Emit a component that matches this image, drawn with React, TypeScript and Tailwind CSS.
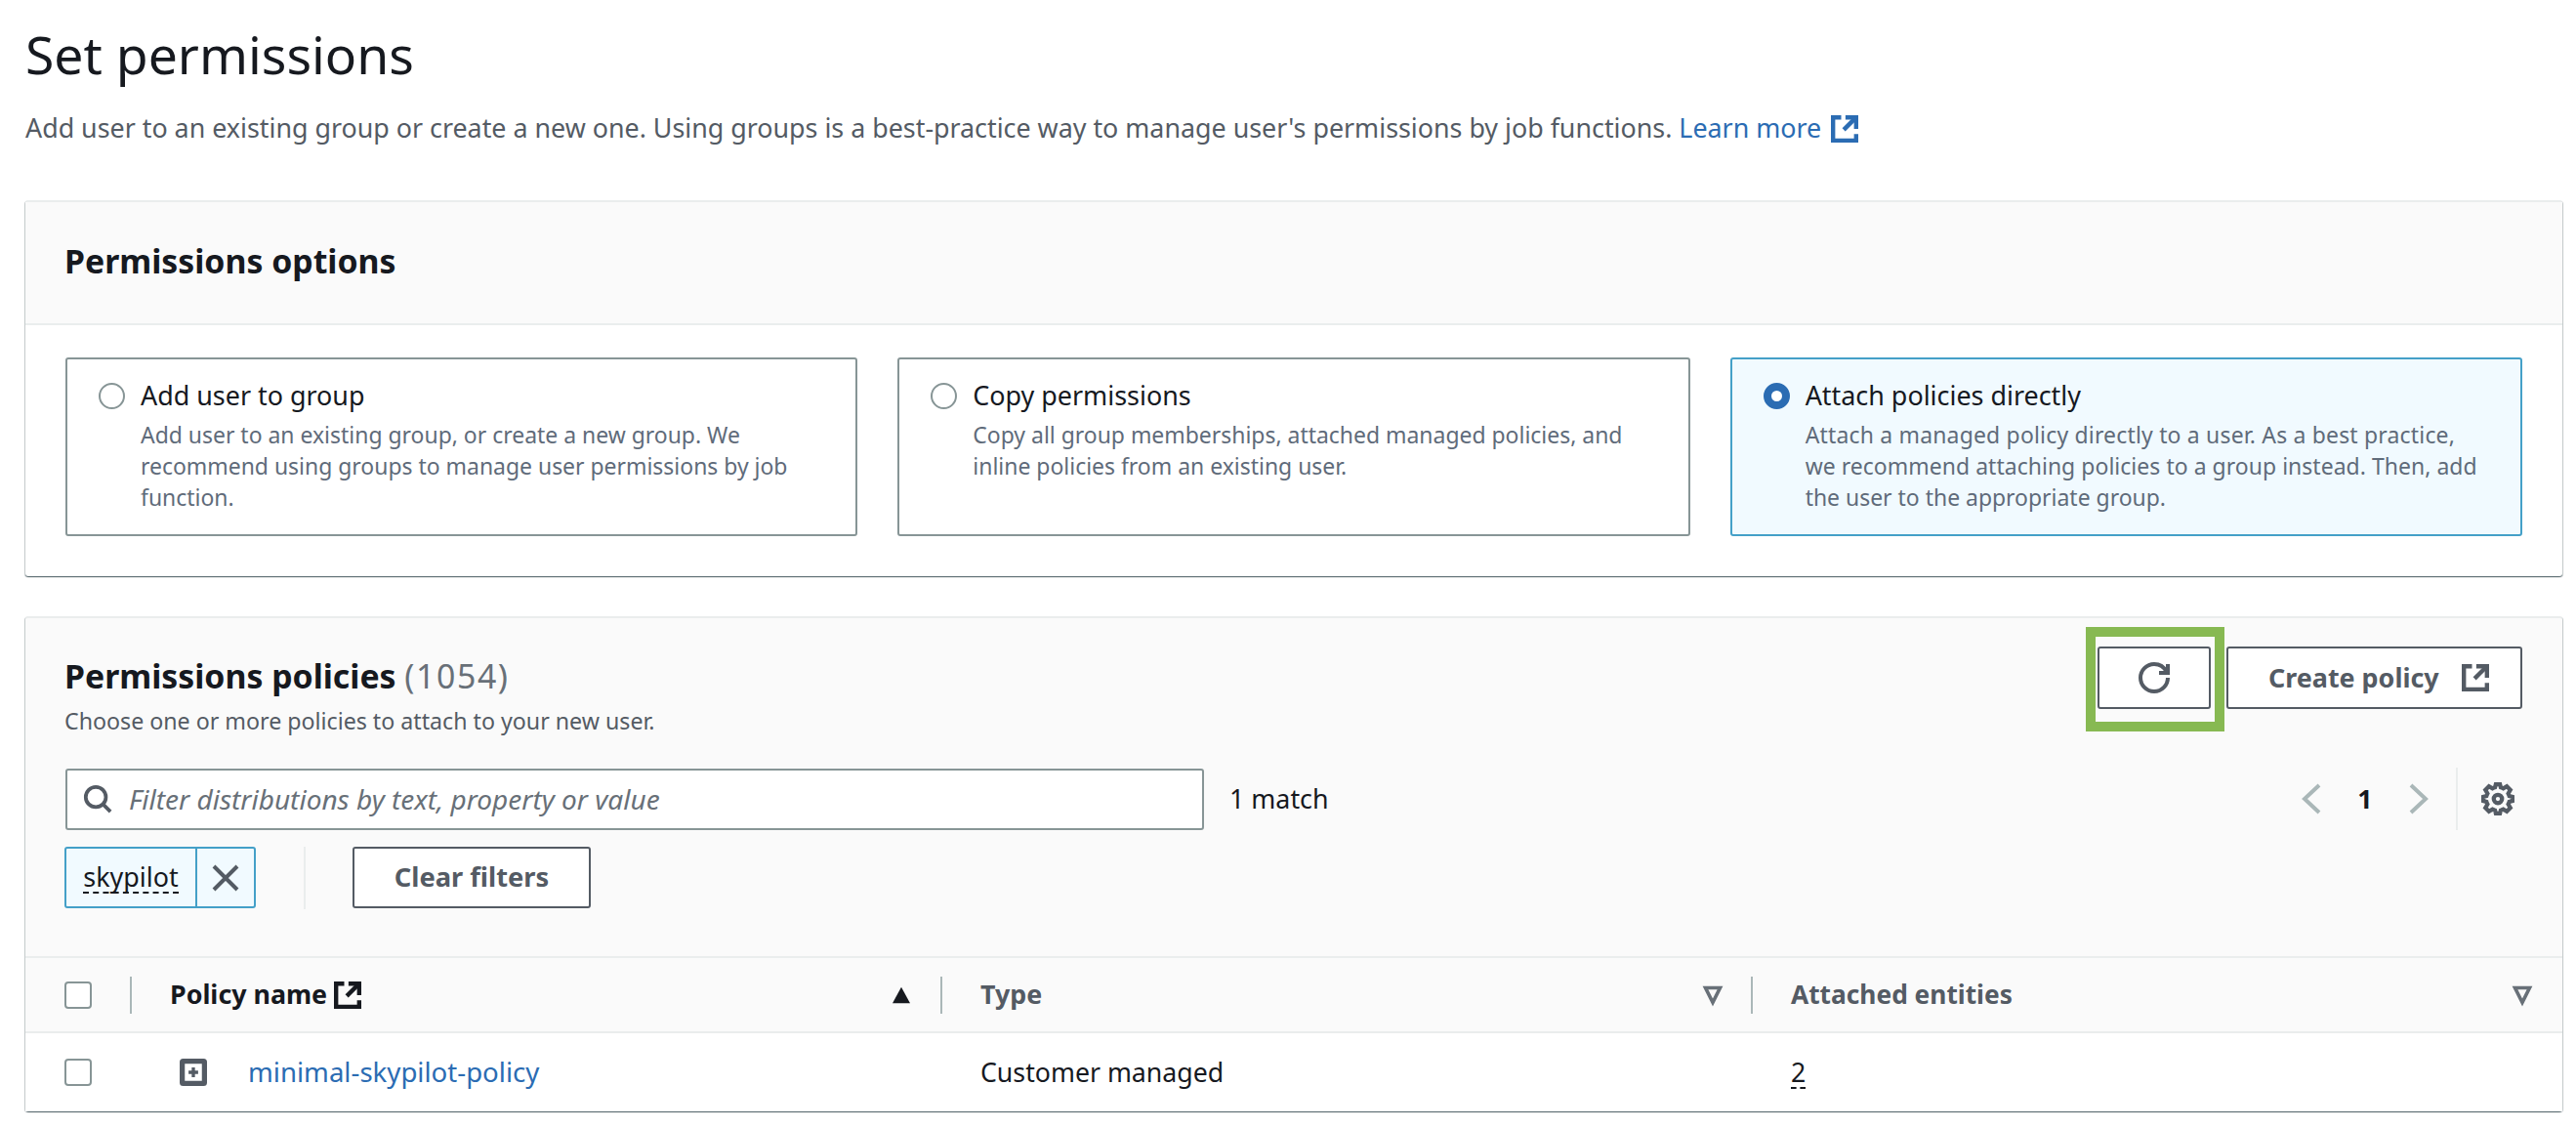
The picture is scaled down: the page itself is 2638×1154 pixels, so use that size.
import React from "react";

const Ext = ({ className }: { className: string }) => (
  <svg viewBox="0 0 16 16" fill="none" stroke="currentColor" strokeWidth="2.5" className={className}>
    <path d="M14.75 8V1.25H8.5" />
    <path d="M14.5 1.5 7.5 8.5" />
    <path d="M6 1.25H1.25v13.5h13.5V11" />
  </svg>
);

const Radio = ({ on }: { on?: boolean }) =>
  on ? (
    <span className="w-[27px] h-[27px] rounded-full border-[8px] border-[#2b6cb3] bg-white shrink-0" />
  ) : (
    <span className="w-[27px] h-[27px] rounded-full border-2 border-[#879596] bg-white shrink-0" />
  );

const Card = ({ title, children, on }: { title: string; children: React.ReactNode; on?: boolean }) => (
  <div
    className={`h-[183px] rounded-[3px] border-2 pl-[32px] pr-[38px] pt-[21px] flex gap-[16px] ${
      on ? "border-[#44a0c8] bg-[#f1faff]" : "border-[#879596] bg-white"
    }`}
  >
    <div className="h-[32px] flex items-center">
      <Radio on={on} />
    </div>
    <div>
      <div className="text-[26.9px] leading-[32px] text-[#16191f] whitespace-nowrap">{title}</div>
      <div className="mt-[8px] text-[22.95px] leading-[32px] text-[#5f6b7a]">{children}</div>
    </div>
  </div>
);

const Check = () => <span className="block w-[28px] h-[28px] rounded-[4px] border-2 border-[#879596] bg-white" />;

const Down = () => (
  <svg viewBox="0 0 16 16" className="w-[24px] h-[24px] text-[#687078]" fill="none" stroke="currentColor" strokeWidth="2.4">
    <path d="M3 3h10l-5 10z" />
  </svg>
);

const Up = () => (
  <svg viewBox="0 0 16 16" className="w-[24px] h-[24px] text-[#16191f]" fill="currentColor">
    <path d="M8 2.5 14 13.5H2z" />
  </svg>
);

const HeaderCell = ({ children }: { children: React.ReactNode }) => (
  <div className="h-[38px] border-l-2 border-[#aab7b8] pl-[39px] flex items-center justify-between text-[26.8px] font-bold text-[#545b64]">
    {children}
  </div>
);

export default function App() {
  return (
    <div className="w-[2638px] h-[1154px] overflow-hidden bg-white pl-[26px] pr-[14px] font-['Noto_Sans','Open_Sans',sans-serif] text-[#16191f]">
      <div className="h-[24px]" />
      <h1 className="h-[64px] text-[53.5px] leading-[64px] font-normal">Set permissions</h1>
      <p className="mt-[27px] text-[26.83px] leading-[32px] text-[#545b64] whitespace-nowrap">
        Add user to an existing group or create a new one. Using groups is a best-practice way to manage user's permissions by job functions.{" "}
        <span className="text-[#2b6cb3]">Learn more</span>
        <Ext className="inline-block w-[28px] h-[28px] ml-[10px] -mt-[4px] text-[#2b6cb3]" />
      </p>

      <section className="mt-[58px] bg-white border-t-2 border-[#eaeded] rounded-[3px] shadow-[0_1px_1px_0_rgba(0,28,36,0.5),1px_1px_1px_0_rgba(0,28,36,0.2),-1px_1px_1px_0_rgba(0,28,36,0.2)]">
        <div className="h-[126px] bg-[#fafafa] border-b-2 border-[#eaeded] px-[40px] pb-[4px] flex items-center">
          <h2 className="text-[33.8px] leading-[40px] font-bold">Permissions options</h2>
        </div>
        <div className="px-[41px] pt-[33px] pb-[41px] grid grid-cols-3 gap-[41px]">
          <Card title="Add user to group">Add user to an existing group, or create a new group. We recommend using groups to manage user permissions by job function.</Card>
          <Card title="Copy permissions">Copy all group memberships, attached managed policies, and inline policies from an existing user.</Card>
          <Card on title="Attach policies directly">
            <div className="whitespace-nowrap tracking-[0.2px]">Attach a managed policy directly to a user. As a best practice,</div>
            <div className="whitespace-nowrap tracking-[0.05px]">we recommend attaching policies to a group instead. Then, add</div>
            <div className="whitespace-nowrap">the user to the appropriate group.</div>
          </Card>
        </div>
      </section>

      <section className="mt-[41px] bg-[#fafafa] border-t-2 border-[#eaeded] rounded-[3px] shadow-[0_1px_1px_0_rgba(0,28,36,0.5),1px_1px_1px_0_rgba(0,28,36,0.2),-1px_1px_1px_0_rgba(0,28,36,0.2)]">
        <div className="pl-[40px] pr-[41px] pt-[29px] flex justify-between items-start">
          <div className="pt-[10px]">
            <h2 className="text-[33.8px] leading-[40px] font-bold">
              Permissions policies <span className="font-normal text-[#687078] tracking-[1.6px]">(1054)</span>
            </h2>
            <p className="mt-[10px] text-[23.2px] leading-[32px] text-[#545b64]">Choose one or more policies to attach to your new user.</p>
          </div>
          <div className="flex gap-[16px]">
            <div className="relative">
              <button className="w-[116px] h-[64px] rounded-[3px] border-2 border-[#545b64] bg-white flex items-center justify-center text-[#545b64]">
                <svg viewBox="0 0 16 16" fill="none" stroke="currentColor" strokeWidth="2" className="w-[32px] h-[32px]">
                  <path d="M15 8a7 7 0 1 1-7-7c2.8 0 5.2 1.6 6.3 4" />
                  <path d="M15 1v4.5h-4.5" />
                </svg>
              </button>
              <span className="absolute -left-[12px] -right-[14px] -top-[20px] -bottom-[23px] border-[10px] border-[#87b952]" />
            </div>
            <button className="w-[303px] h-[64px] rounded-[3px] border-2 border-[#545b64] bg-white flex items-center justify-start pl-[41px] gap-[23px] text-[26.9px] font-bold text-[#545b64]">
              Create policy
              <Ext className="w-[28px] h-[28px]" />
            </button>
          </div>
        </div>

        <div className="ml-[41px] mr-[48px] mt-[32px] flex items-center justify-between">
          <div className="flex items-center">
            <div className="w-[1166px] h-[63px] rounded-[3px] border-2 border-[#879596] bg-white flex items-center pl-[16px] gap-[17px] text-[#545b64]">
              <svg viewBox="0 0 16 16" fill="none" stroke="currentColor" strokeWidth="2" className="w-[30px] h-[30px] shrink-0">
                <circle cx="7" cy="7" r="5.5" />
                <path d="m15 15-4-4" />
              </svg>
              <span className="text-[28px] italic text-[#687078]">Filter distributions by text, property or value</span>
            </div>
            <span className="ml-[26px] text-[26.8px]">1 match</span>
          </div>
          <div className="flex items-center">
            <svg viewBox="0 0 16 16" fill="none" stroke="#aab7b8" strokeWidth="2" className="w-[32px] h-[32px]">
              <path d="M12 1 4.5 8l7.5 7" />
            </svg>
            <span className="w-[78px] text-center text-[26.7px] font-bold">1</span>
            <svg viewBox="0 0 16 16" fill="none" stroke="#aab7b8" strokeWidth="2" className="w-[32px] h-[32px]">
              <path d="m4 1 7.5 7-7.5 7" />
            </svg>
            <span className="ml-[22px] h-[64px] border-l-2 border-[#eaeded]" />
            <svg viewBox="0 0 16 16" fill="none" stroke="#545b64" strokeWidth="2" className="ml-[24px] mr-[1px] w-[34px] h-[34px]">
              <path d="M13 5.4l1-1.7-1.7-1.7-1.7 1c-.4-.2-.8-.4-1.2-.5L9 1H7l-.4 1.5c-.4.1-.8.3-1.2.5l-1.7-1L2 3.7l1 1.7c-.2.4-.4.8-.5 1.2L1 7v2l1.5.4c.1.4.3.8.5 1.2l-1 1.7L3.7 14l1.7-1c.4.2.8.4 1.2.5L7 15h2l.4-1.5c.4-.1.8-.3 1.2-.5l1.7 1 1.7-1.7-1-1.7c.2-.4.4-.8.5-1.2L15 9V7l-1.5-.4c-.1-.4-.3-.8-.5-1.2z" />
              <circle cx="8" cy="8" r="2" />
            </svg>
          </div>
        </div>

        <div className="ml-[40px] mr-[41px] mt-[17px] flex items-center h-[63px]">
          <div className="h-[63px] w-[196px] rounded-[3px] border-2 border-[#44a0c8] bg-[#f1faff] flex">
            <div className="w-[132px] flex items-center justify-center">
              <span className="text-[26.9px] leading-[31px] border-b-2 border-dashed border-[#16191f]">skypilot</span>
            </div>
            <div className="flex-1 border-l-2 border-[#44a0c8] flex items-center justify-center text-[#545b64]">
              <svg viewBox="0 0 16 16" fill="none" stroke="currentColor" strokeWidth="2" className="w-[32px] h-[32px]">
                <path d="m2 2 12 12M14 2 2 14" />
              </svg>
            </div>
          </div>
          <span className="ml-[49px] h-[64px] border-l-2 border-[#eaeded]" />
          <button className="ml-[48px] w-[244px] h-[63px] rounded-[3px] border-2 border-[#545b64] bg-white text-[27.3px] font-bold text-[#545b64]">Clear filters</button>
        </div>

        <div className="mt-[49px] h-[79px] border-t-2 border-b-2 border-[#eaeded] grid grid-cols-[107px_830px_830px_1fr] items-center">
          <div className="pl-[40px]"><Check /></div>
          <HeaderCell>
            <span className="flex items-center gap-[7px] text-[#16191f]">
              Policy name
              <Ext className="w-[28px] h-[28px]" />
            </span>
            <span className="pr-[28px]"><Up /></span>
          </HeaderCell>
          <HeaderCell>
            <span>Type</span>
            <span className="pr-[27px]"><Down /></span>
          </HeaderCell>
          <HeaderCell>
            <span className="text-[26.3px]">Attached entities</span>
            <span className="pr-[29px]"><Down /></span>
          </HeaderCell>
        </div>

        <div className="h-[80px] bg-white grid grid-cols-[107px_830px_830px_1fr] items-center text-[26.7px]">
          <div className="pl-[40px]"><Check /></div>
          <div className="pl-[51px] flex items-center gap-[42px]">
            <svg viewBox="0 0 16 16" fill="none" stroke="#545b64" className="w-[28px] h-[28px]">
              <rect x="1.5" y="1.5" width="13" height="13" rx="0.5" strokeWidth="3" />
              <path d="M5.2 8h5.6M8 5.2v5.6" strokeWidth="1.9" />
            </svg>
            <span className="text-[27.6px] text-[#2b6cb3]">minimal-skypilot-policy</span>
          </div>
          <div className="pl-[41px]">Customer managed</div>
          <div className="pl-[41px]"><span className="border-b-2 border-dashed border-[#16191f] leading-[30px] inline-block">2</span></div>
        </div>
      </section>
    </div>
  );
}
